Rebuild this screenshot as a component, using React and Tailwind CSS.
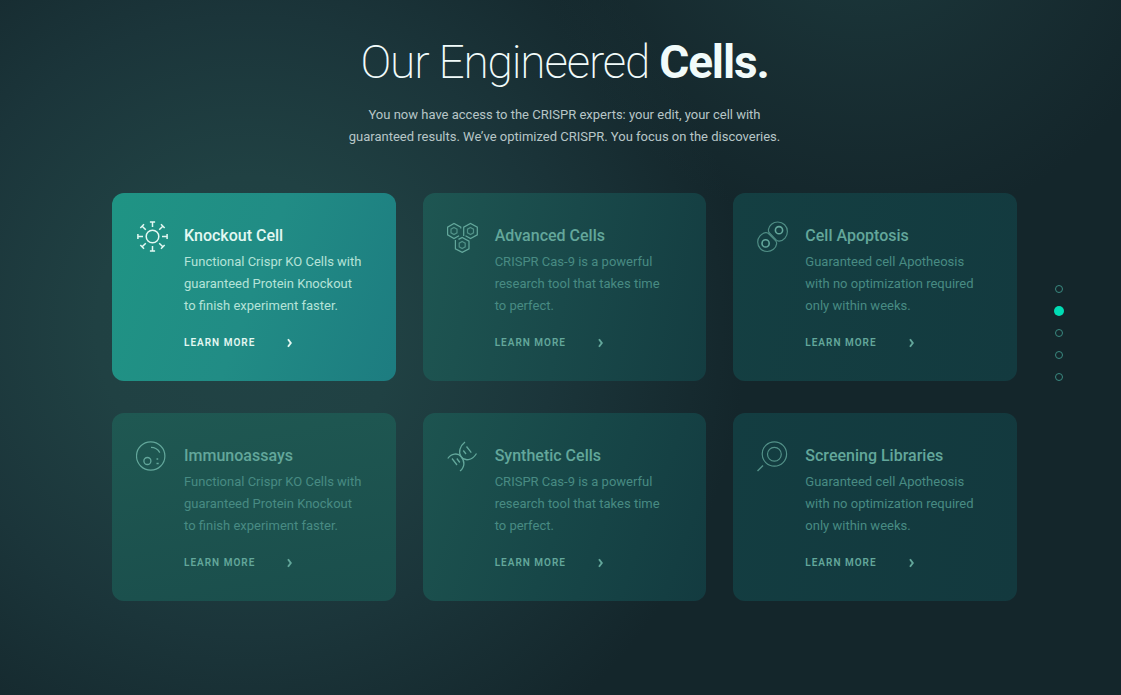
import React from "react";

const iconProps = {
  viewBox: "0 0 32 32",
  fill: "none",
  stroke: "currentColor",
  "aria-hidden": true,
  className: "size-8 shrink-0",
};

function VirusIcon() {
  return (
    <svg {...iconProps} strokeWidth="1.5">
      <circle cx="16.5" cy="15.5" r="6.3" />
      {[0, 45, 90, 135, 180, 225, 270, 315].map((a) => (
        <path key={a} d="M16.5 6V0.9M13.9 0.9H19.1" transform={`rotate(${a} 16.5 15.5)`} />
      ))}
    </svg>
  );
}

function HexagonsIcon() {
  const hexes = [
    [7, 10, "M13.8 7.6V6.2L7 2.4L0.6 6.2V13.8L7 17.6L12 14.8"],
    [23.5, 10, "M16.7 15V6.2L23.5 2.4L30.3 6.2V13.8L23.5 17.6L18.5 14.8"],
    [15.2, 24, "M8.4 19V27.8L15.2 31.4L22 27.8V20.2L15.2 16.4L11.5 18.4"],
  ];
  return (
    <svg {...iconProps} strokeWidth="1.2">
      {hexes.map(([x, y, d]) => (
        <g key={x}>
          <path d={d} />
          <path
            d="M0 -3.5L3 -1.8V1.8L0 3.5L-3 1.8V-1.8Z"
            transform={`translate(${x} ${y})`}
            opacity="0.75"
          />
        </g>
      ))}
    </svg>
  );
}

function DividingCellIcon() {
  return (
    <svg {...iconProps} strokeWidth="1.2">
      <g opacity="0.75">
        <path d="M11.4 8.600C12 4.300 16 1 20.800 1C26.200 1 30.400 5.200 30.400 10.500C30.400 15.500 26.700 19.700 22.200 20.100C20.900 20.200 19.900 19.700 18.900 18.700L12.500 12C11.500 11 11.200 10 11.400 8.600Z" />
        <path d="M19.600 22.900C19 27.200 15 30.500 10.200 30.500C4.800 30.500 0.700 26.300 0.700 21C0.700 16.300 4.200 12.300 8.600 11.700C10 11.500 11.100 12 12 13L18.500 19.700C19.500 20.700 19.800 21.600 19.600 22.900Z" />
      </g>
      <circle cx="22" cy="9.200" r="3.600" strokeWidth="1.600" />
      <circle cx="8.600" cy="22.400" r="3.600" strokeWidth="1.600" />
    </svg>
  );
}

function CellIcon() {
  return (
    <svg {...iconProps} strokeWidth="1.2">
      <circle cx="14.700" cy="15" r="14.200" />
      <circle cx="11.400" cy="20" r="3.500" strokeWidth="1.300" />
      <path d="M15 6.400C19 6.400 22 8.300 23.800 11.600" />
      <path d="M20.500 18H22.200M20.500 22.500H22.700" strokeWidth="1.600" />
    </svg>
  );
}

function DnaIcon() {
  return (
    <svg {...iconProps} strokeWidth="1.300">
      <path d="M0.800 17.500C4 12.500 11 11.500 14 15.500C17.500 20.500 25 19.800 29.500 12.500" />
      <path d="M18 1C13 5 11 11 14 15.500C18 20 18 26 13 30" />
      <path d="M16.300 9.500L19 13M19.500 5.500L24.300 11.600" />
      <path d="M5 17.500L10 24M9.800 17.500L12.800 21.500" />
    </svg>
  );
}

function MagnifierIcon() {
  return (
    <svg {...iconProps} strokeWidth="1.200" opacity="0.8">
      <circle cx="17.400" cy="13" r="12.200" />
      <circle cx="17.400" cy="13.200" r="6.900" />
      <path d="M6 24.500L0.500 30" strokeWidth="1.500" />
    </svg>
  );
}

const knockoutText = ["Functional Crispr KO Cells with", "guaranteed Protein Knockout", "to finish experiment faster."];
const crisprText = ["CRISPR Cas-9 is a powerful", "research tool that takes time", "to perfect."];
const apoptosisText = ["Guaranteed cell Apotheosis", "with no optimization required", "only within weeks."];

const cards = [
  { title: "Knockout Cell", lines: knockoutText, Icon: VirusIcon, active: true, bg: "bg-linear-110 from-[#1f9484] via-[#218c85] to-[#1d7c80]" },
  { title: "Advanced Cells", lines: crisprText, Icon: HexagonsIcon, bg: "bg-linear-100 from-[#1e5652] via-[#19494a] to-[#143d41]" },
  { title: "Cell Apoptosis", lines: apoptosisText, Icon: DividingCellIcon, bg: "bg-linear-100 from-[#143f42] to-[#133a3f]" },
  { title: "Immunoassays", lines: knockoutText, Icon: CellIcon, bg: "bg-linear-170 from-[#1f5852] to-[#1a4e4c]" },
  { title: "Synthetic Cells", lines: crisprText, Icon: DnaIcon, bg: "bg-linear-110 from-[#1d5450] via-[#174748] to-[#133b40]" },
  { title: "Screening Libraries", lines: apoptosisText, Icon: MagnifierIcon, bg: "bg-linear-100 from-[#133d41] to-[#13393e]" },
];

function Card({ title, lines, Icon, active, bg }) {
  return (
    <article className={`flex gap-4 rounded-xl px-6 pt-7 pb-7 ${bg} ${active ? "text-[#e3f8f2]" : "text-[#63a79b]"}`}>
      <Icon />
      <div className="min-w-0">
        <h2 className="text-base leading-[30px] font-medium">{title}</h2>
        <p className={`text-[13px] leading-[22px] ${active ? "text-[#b5e3d8]" : "text-[#488b83]"}`}>
          {lines.map((line) => (
            <span key={line} className="block whitespace-nowrap">{line}</span>
          ))}
        </p>
        <a href="#" className="mt-4 inline-flex h-5 items-center gap-8 text-[10px] leading-5 font-semibold tracking-widest">
          LEARN MORE
          <svg viewBox="0 0 6 10" className="h-2.5 w-1.5" fill="none" stroke="currentColor" strokeWidth="1.900" aria-hidden="true">
            <path d="M1 1.300L3.800 5L1 8.700" />
          </svg>
        </a>
      </div>
    </article>
  );
}

export default function App() {
  return (
    <main className="flex min-h-screen bg-[#14262b] bg-[radial-gradient(circle_at_77%_-14%,#20464899_0px,#1c363a80_180px,transparent_330px),radial-gradient(circle_at_22%_47%,#214345_0px,#204143_150px,#1b353a_310px,#14262b_500px)] pl-28 font-['Roboto',sans-serif]">
      <div className="flex-1">
        <header className="pt-[38px] text-center">
          <h1 className="text-[46px] leading-[48px] font-extralight tracking-tight text-[#f1fbfa]">
            Our Engineered <strong className="font-bold">Cells.</strong>
          </h1>
          <p className="mt-[18px] text-[13px] leading-[22px] text-[#b7c6c7]">
            You now have access to the CRISPR experts: your edit, your cell with
            <br />
            guaranteed results. We’ve optimized CRISPR. You focus on the discoveries.
          </p>
        </header>
        <section className="mt-[45px] grid grid-cols-3 gap-x-[27px] gap-y-8" aria-label="Engineered cells">
          {cards.map((card) => (
            <Card key={card.title} {...card} />
          ))}
        </section>
      </div>
      <nav className="flex w-[104px] flex-col items-center justify-center pr-5 pb-[30px]" aria-label="Sections">
        {[1, 2, 3, 4, 5].map((n) => (
          <button key={n} type="button" aria-label={`Section ${n}`} className="grid h-[22px] w-[22px] place-items-center">
            <span className={n === 2 ? "size-2.5 rounded-full bg-[#00dcb4]" : "size-2 rounded-full border border-[#3a8980]"} />
          </button>
        ))}
      </nav>
    </main>
  );
}
